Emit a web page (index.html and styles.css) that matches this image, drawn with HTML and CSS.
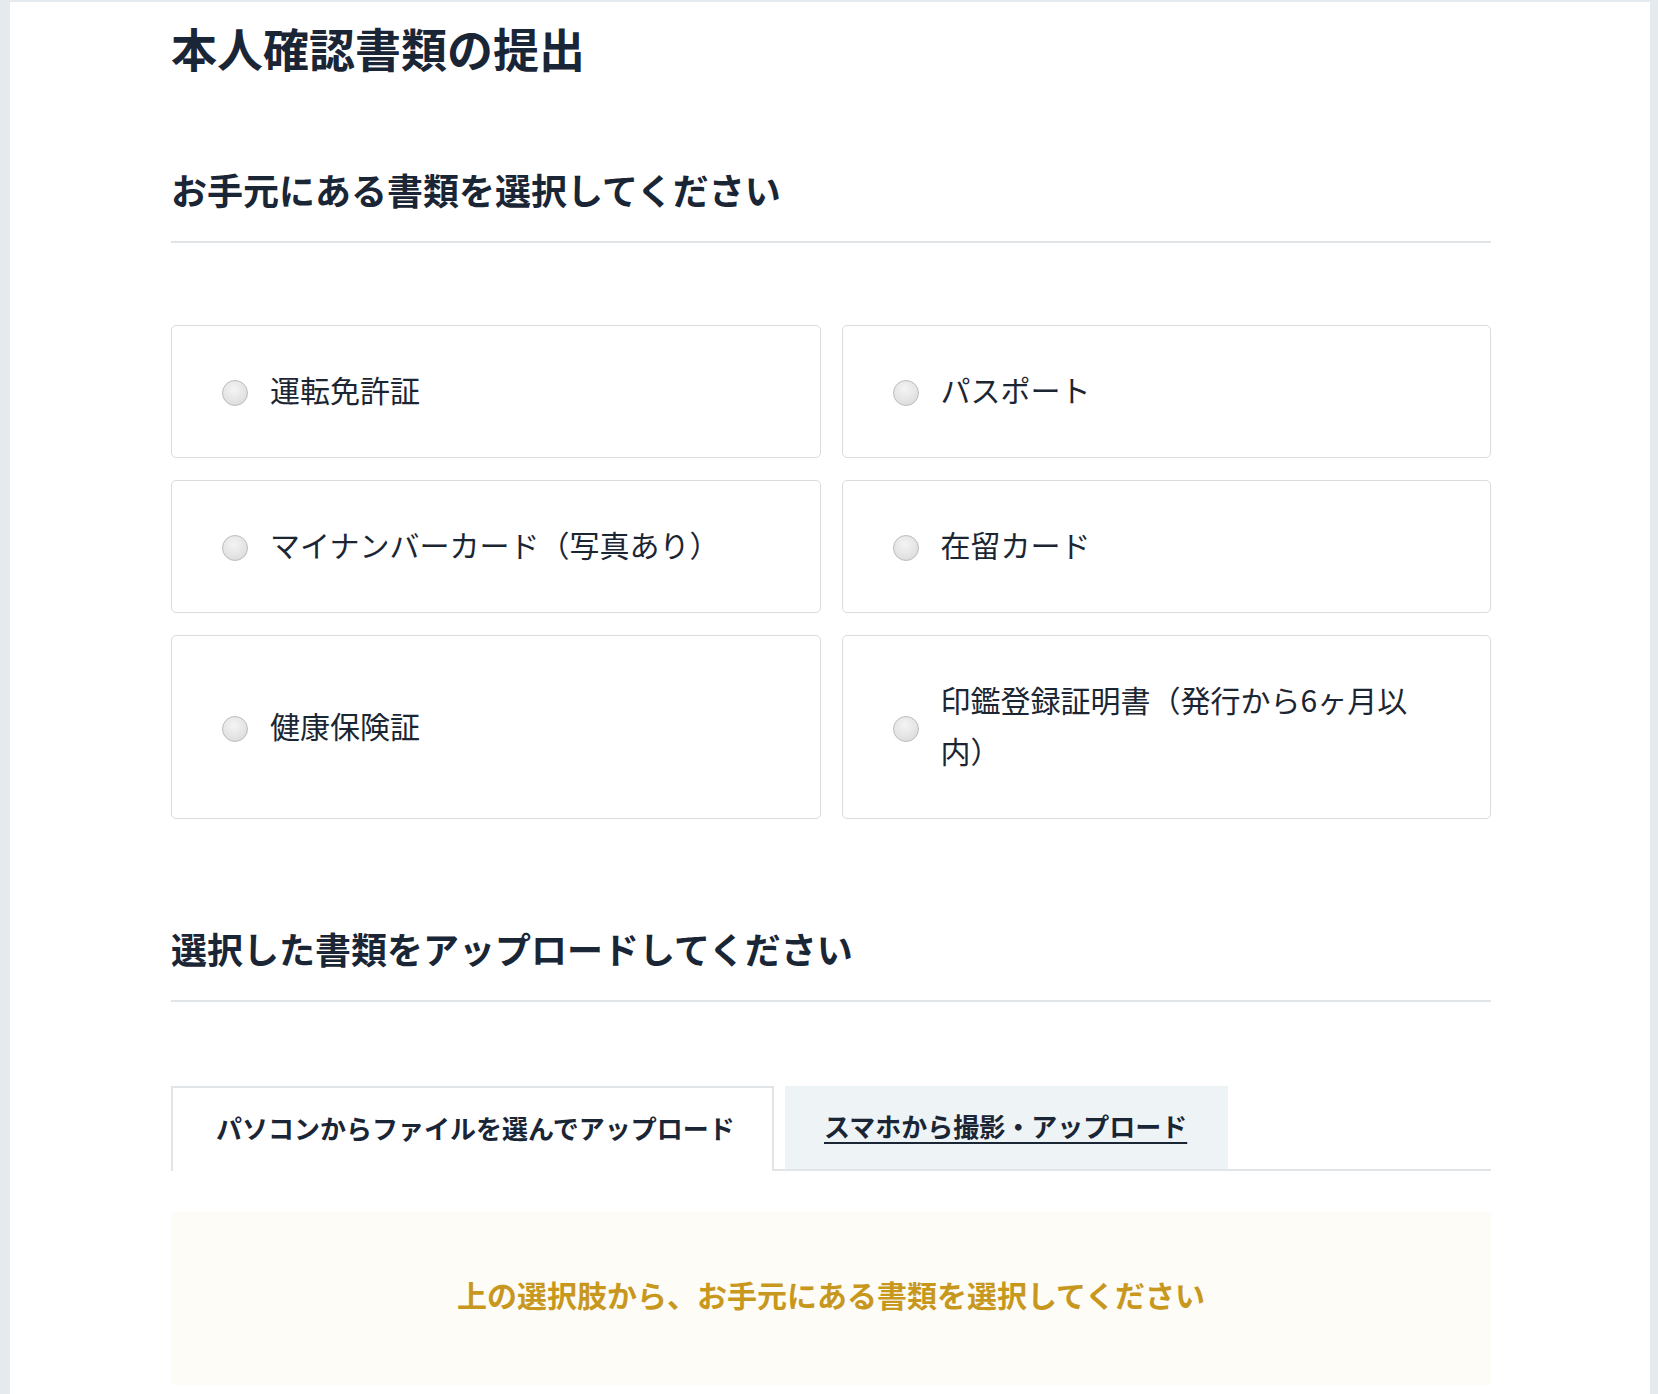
FILE: index.html
```html
<!DOCTYPE html>
<html lang="ja">
<head>
<meta charset="utf-8">
<title>本人確認書類の提出</title>
<link rel="stylesheet" href="styles.css">
</head>
<body>
<div class="page">
  <div class="container">
    <h1 class="title">本人確認書類の提出</h1>

    <h2 class="section-title">お手元にある書類を選択してください</h2>

    <div class="doc-grid">
      <label class="doc-card"><span class="radio"></span><span class="doc-label">運転免許証</span></label>
      <label class="doc-card"><span class="radio"></span><span class="doc-label">パスポート</span></label>
      <label class="doc-card"><span class="radio"></span><span class="doc-label">マイナンバーカード（写真あり）</span></label>
      <label class="doc-card"><span class="radio"></span><span class="doc-label">在留カード</span></label>
      <label class="doc-card"><span class="radio"></span><span class="doc-label">健康保険証</span></label>
      <label class="doc-card"><span class="radio"></span><span class="doc-label">印鑑登録証明書（発行から6ヶ月以内）</span></label>
    </div>

    <h2 class="section-title second">選択した書類をアップロードしてください</h2>

    <div class="tabs">
      <div class="tab active">パソコンからファイルを選んでアップロード</div>
      <a class="tab link" href="#">スマホから撮影・アップロード</a>
    </div>

    <div class="notice">上の選択肢から、お手元にある書類を選択してください</div>
  </div>
</div>
</body>
</html>
```
FILE: styles.css
```css
* { box-sizing: border-box; }

html, body {
  margin: 0;
  padding: 0;
}

body {
  background: #e4eaee;
  font-family: "Noto Sans CJK JP", "Noto Sans", sans-serif;
  color: #172331;
  height: 1394px;
  overflow: hidden;
}

.page {
  margin: 2px 8px 0 10px;
  background: #ffffff;
  min-height: 1392px;
  padding-top: 11px;
}

.container {
  width: 1320px;
  margin-left: 161px;
}

.title {
  margin: 0;
  font-size: 46px;
  line-height: 68px;
  font-weight: 700;
  color: #1a2635;
}

.section-title {
  margin: 81px 0 0;
  font-size: 36px;
  line-height: 54px;
  font-weight: 700;
  color: #1a2635;
  padding-bottom: 25px;
  border-bottom: 2px solid #e1e5e8;
}

.section-title.second {
  margin-top: 102px;
}

.doc-grid {
  margin-top: 82px;
  display: grid;
  grid-template-columns: 1fr 1fr;
  column-gap: 21px;
  row-gap: 22px;
}

.doc-card {
  display: flex;
  align-items: center;
  gap: 22px;
  padding: 38px 50px 42px 50px;
  border: 1.5px solid #d9dde0;
  border-radius: 5px;
  background: #fff;
  font-size: 30px;
  line-height: 51px;
  color: #1c2633;
}

.radio {
  flex: 0 0 26px;
  width: 26px;
  height: 26px;
  border-radius: 50%;
  border: 1px solid #b9bcbf;
  background: radial-gradient(circle at 45% 35%, #f4f4f4 0%, #e3e3e3 60%, #d4d4d4 100%);
  margin-top: 7px;
}

.doc-label {
  display: block;
}

.tabs {
  margin-top: 84px;
  display: flex;
  gap: 11px;
  border-bottom: 2px solid #e1e5e8;
  height: 85px;
}

.tab {
  display: flex;
  align-items: center;
  height: 85px;
  padding-bottom: 4px;
  font-size: 26px;
  font-weight: 700;
  color: #1a2635;
  white-space: nowrap;
}

.tab.active {
  width: 603px;
  padding-left: 43px;
  border: 2px solid #e1e5e8;
  border-bottom: none;
  background: #fff;
  margin-bottom: -2px;
  height: 85px;
}

.tab.link {
  width: 443px;
  padding-left: 39px;
  background: #eef3f5;
  height: 83px;
  text-decoration: underline;
  text-decoration-thickness: 2px;
  text-underline-offset: 5px;
}

.notice {
  margin-top: 41px;
  height: 173px;
  padding-bottom: 10px;
  background: #fdfcf6;
  display: flex;
  align-items: center;
  justify-content: center;
  font-size: 30px;
  font-weight: 700;
  color: #c8981e;
}
```
